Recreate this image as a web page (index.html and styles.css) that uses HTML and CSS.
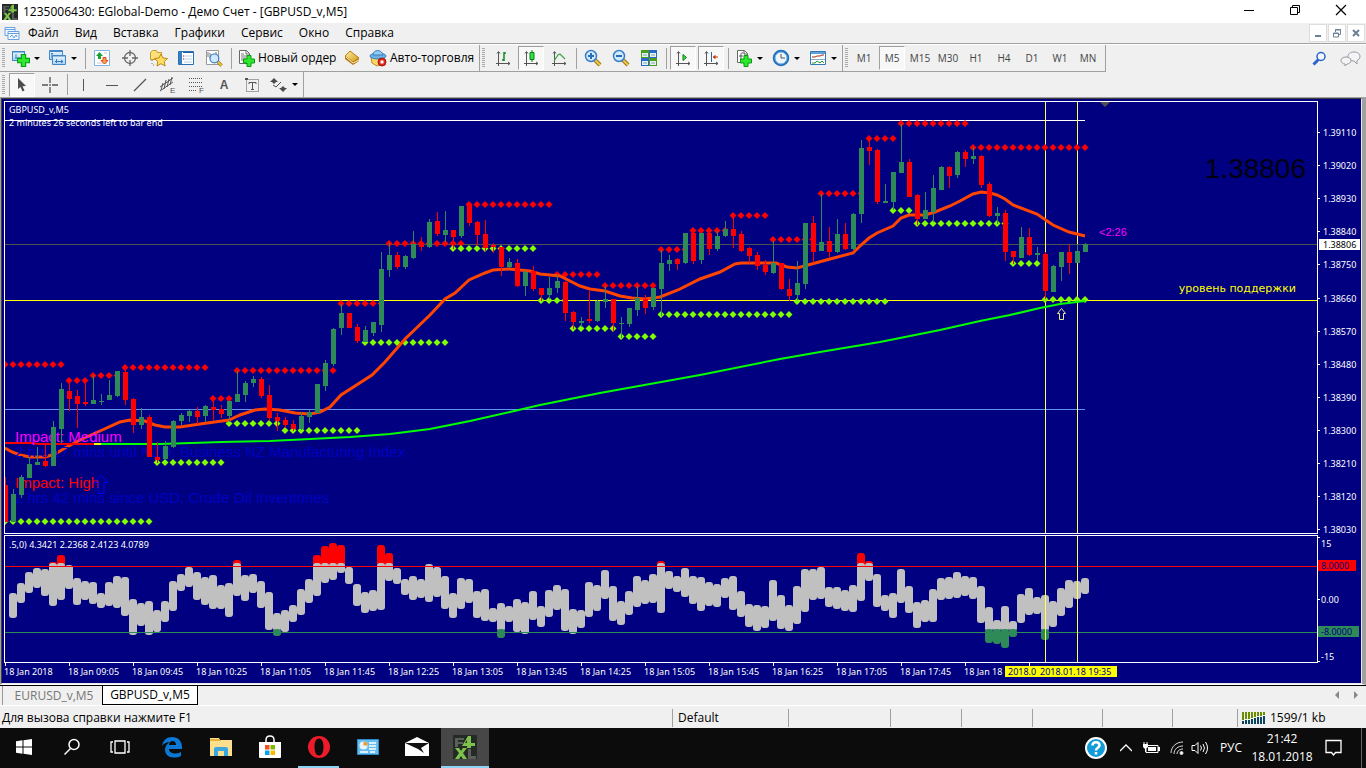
FILE: index.html
```html
<!DOCTYPE html>
<html lang="ru">
<head>
<meta charset="utf-8">
<title>1235006430: EGlobal-Demo - Демо Счет - [GBPUSD_v,M5]</title>
<link rel="stylesheet" href="styles.css">
</head>
<body>
<svg class="defs" aria-hidden="true">
  <defs>
    <linearGradient id="gold" x1="0" y1="0" x2="1" y2="1"><stop offset="0" stop-color="#fff2a0"/><stop offset="1" stop-color="#d09a18"/></linearGradient>
    <linearGradient id="sky" x1="0" y1="0" x2="0" y2="1"><stop offset="0" stop-color="#eaf6ff"/><stop offset="1" stop-color="#a8d4f5"/></linearGradient>
    <symbol id="x4" viewBox="0 0 24 24"><rect width="24" height="24" fill="#262a26"/><path d="M2 3h9v2H5v2h5v2H5v3H2z" fill="#596059"/><path d="M18 1v7h4v3h-4v2h-4v-2H9L15 1zm-4 7V5l-2 3z" fill="#7dc24b"/><path d="M2 13h4l2 3 2-3h4l-4 5 4 6h-4l-2-3-2 3H2l4-6z" fill="#7dc24b"/><path d="M15 14h3v7h5v3h-8z" fill="#596059"/></symbol>
    <symbol id="plus" viewBox="0 0 12 12"><path d="M4 .5h4V4h3.500v4H8v3.500H4V8H.5V4H4z" fill="#2ee82e" stroke="#079a15"/></symbol>
    <symbol id="axes" viewBox="0 0 20 20"><path d="M5.500 4v14M3 15.500h14M4 5.500l1.500-2L7 5.500M15 14l2 1.500-2 1.500" fill="none" stroke="#555"/></symbol>
    <symbol id="lens" viewBox="0 0 20 20"><path d="M12 12l5 5" stroke="#9b741a" stroke-width="4"/><path d="M12 12l5 5" stroke="#f0cc45" stroke-width="2"/><circle cx="8" cy="8" r="5.500" fill="#cfeaff" stroke="#3b7dc6" stroke-width="1.500"/></symbol>
  </defs>
</svg>

<header class="titlebar">
  <svg class="app-logo" aria-hidden="true"><use href="#x4"/></svg>
  <h1>1235006430: EGlobal-Demo - Демо Счет - [GBPUSD_v,M5]</h1>
  <div class="window-controls">
    <button aria-label="Свернуть"><svg width="12" height="12"><path d="M1 6.500h10" stroke="#000"/></svg></button>
    <button aria-label="Восстановить"><svg width="12" height="12" fill="none" stroke="#000"><path d="M1.500 3.500h7v7h-7zM3.500 3.500v-2h7v7h-2"/></svg></button>
    <button aria-label="Закрыть"><svg width="12" height="12"><path d="M1 1l10 10M11 1L1 11" stroke="#000" stroke-width="1.200"/></svg></button>
  </div>
</header>

<nav class="menubar" aria-label="Меню">
  <svg class="menu-icon" viewBox="0 0 16 16" fill="#f3f8ff" stroke="#69a1e4"><path d="M1 2.500h10v8H1zM1 4.500h10"/><path d="M4 6.500h11v8H4zM4 8.500h11M6 12l2-2 2 3 2-3 1 2"/></svg>
  <button>Файл</button><button>Вид</button><button>Вставка</button><button>Графики</button><button>Сервис</button><button>Окно</button><button>Справка</button>
  <div class="mdi-controls">
    <button aria-label="Свернуть окно"><svg width="10" height="10"><path d="M2 8h6" stroke="#6b8195" stroke-width="2"/></svg></button>
    <button aria-label="Восстановить окно"><svg width="10" height="10" fill="none" stroke="#6b8195"><path d="M1.500 5h5v4h-5zM1 5.500h6M3.500 4V1.500h5v5H7M3 2h6"/></svg></button>
    <button aria-label="Закрыть окно"><svg width="10" height="10"><path d="M2 2l6 6M8 2L2 8" stroke="#6b8195" stroke-width="2"/></svg></button>
  </div>
</nav>

<div class="toolrow">
  <div class="toolbar">
    <button class="tool split" aria-label="Новый график"><svg class="icon"><rect x="1.500" y="3.500" width="12" height="9" fill="url(#sky)" stroke="#4286c4"/><path d="M2 4h11" stroke="#4286c4"/><path d="M4 10h7M5 6v5" stroke="#4b87b9"/><use href="#plus" x="6" y="6" width="13" height="13"/></svg><i class="caret"></i></button>
    <button class="tool split" aria-label="Профили"><svg class="icon"><g fill="url(#sky)" stroke="#4286c4"><path d="M1.500 2.500h13v9h-13z"/><path d="M4.500 7.500h13v9h-13z"/></g><path d="M2 3.500h12M5 8h12" stroke="#4286c4"/><path d="M7 13.500h8M8.500 11v4M13 12l2 1.500-2 1.500M4 5v5M3 6l1-1 1 1" fill="none" stroke="#3a7cba"/></svg><i class="caret"></i></button>
    <hr>
    <button class="tool" aria-label="Обзор рынка"><svg class="icon"><path d="M2.500 2.500h15v15h-15z" fill="#fff" stroke="#7fb6e6"/><path d="M5 15h10M12 5h3" stroke="#ccc"/><path d="M7.500 4l3.500 4H9v3H6V8H4z" fill="#18a030"/><path d="M12.500 16L9 12.500h2v-3h3v3h2z" fill="#f8a060" stroke="#e04a10"/></svg></button>
    <button class="tool" aria-label="Окно данных"><svg class="icon" fill="none" stroke="#666" stroke-width="1.300"><circle cx="10" cy="10" r="5.500"/><path d="M10 2v6M10 12v6M2 10h6M12 10h6"/></svg></button>
    <button class="tool" aria-label="Навигатор"><svg class="icon"><path d="M2.500 4.500l2-2h4l1 2h4v7h-11z" fill="#fbe07a" stroke="#c79a2a"/><path d="M4 12v5h4" stroke="#777" fill="none" stroke-dasharray="1 2"/><path d="M13 6l2 4 4.500.5-3.300 3 .9 4.500-4.100-2.300L9 18l.8-4.500-3.300-3L11 10z" fill="#ffdf5c" stroke="#bd861a"/></svg></button>
    <button class="tool" aria-label="Терминал"><svg class="icon"><path d="M2.500 3.500h15v13h-15z" fill="#fff" stroke="#2a70b4"/><path d="M3 4h3v12H3z" fill="#347fc6"/><path d="M7 4.500h10" stroke="#1e5fa2"/><path d="M8 8h8M8 11h8M8 14h8" stroke="#b4cfe8"/><path d="M7 8h1M7 11h1" stroke="#c00"/></svg></button>
    <button class="tool" aria-label="Тестер стратегий"><svg class="icon"><path d="M2.500 2.500h12v14h-12z" fill="#fff" stroke="#999"/><path d="M4 9V4M6 10V5M12 8V4" stroke="#777"/><use href="#lens" x="4" y="4" width="16" height="16"/></svg></button>
    <hr>
    <button class="tool text"><svg class="icon"><path d="M2.500 2.500h7l3 3v10h-10z" fill="#fff" stroke="#666"/><path d="M9 3v3h3" fill="none" stroke="#666"/><path d="M4 6h3M4 8h6M4 10h5M4 12h3" stroke="#777"/><use href="#plus" x="6" y="7" width="12" height="12"/></svg>Новый ордер</button>
    <button class="tool book" aria-label="Метаредактор"><svg class="icon"><path d="M8 3l9 7v3l-6 4-8-6V8z" fill="#b57913"/><path d="M8 3l9 7-6 4-8-6z" fill="url(#gold)" stroke="#b98118"/><path d="M4 9l7 6 6-3" fill="none" stroke="#fff3bd"/></svg></button>
    <button class="tool text auto"><svg class="icon"><path d="M3 9h13l-2 7-5 2-5-3z" fill="#f7d766" stroke="#bb8c20"/><ellipse cx="10" cy="8" rx="8" ry="3" fill="#6aafe6" stroke="#3a80b8"/><path d="M5 7c0-6 9-6 10 0z" fill="#93ccf3" stroke="#3a80b8"/><circle cx="14" cy="14" r="4" fill="#dc2b18" stroke="#aa180d"/><path d="M12.500 12.500h3v3h-3z" fill="#fff"/></svg>Авто-торговля</button>
  </div>
  <div class="toolbar">
    <button class="tool" aria-label="Бары"><svg class="icon"><use href="#axes"/><path d="M11 4v9M9 12h2M11 5h2" stroke="#148a22" stroke-width="1.500"/></svg></button>
    <button class="tool pressed" aria-label="Свечи"><svg class="icon"><use href="#axes"/><path d="M11 2v12" stroke="#087f12"/><path d="M9 4.500h4v7H9z" fill="#32e04a" stroke="#087f12"/></svg></button>
    <button class="tool" aria-label="Линия"><svg class="icon"><use href="#axes"/><path d="M5 13l4-6 2-1 5 5" fill="none" stroke="#42a647" stroke-width="1.300"/></svg></button>
    <hr>
    <button class="tool" aria-label="Увеличить"><svg class="icon"><use href="#lens"/><path d="M5 8h6M8 5v6" stroke="#276db8" stroke-width="2"/></svg></button>
    <button class="tool" aria-label="Уменьшить"><svg class="icon"><use href="#lens"/><path d="M5 8h6" stroke="#276db8" stroke-width="2"/></svg></button>
    <button class="tool" aria-label="Упорядочить окна"><svg class="icon"><path d="M2 2h8v8H2zM10 10h8v8h-8z" fill="#4a9e1e"/><path d="M10 2h8v8h-8zM2 10h8v8H2z" fill="#2b68ce"/><path d="M3 5h6v4H3zM11 5h6v4h-6zM3 13h6v4H3zM11 13h6v4h-6z" fill="#e8f2ee"/><path d="M4 7h4M12 7h4M4 15h4M12 15h4" stroke="#7fa6b0"/></svg></button>
    <hr>
    <button class="tool pressed" aria-label="Автопрокрутка"><svg class="icon"><use href="#axes"/><path d="M10 6.500l3.500 3-3.500 3z" fill="#3fe04f" stroke="#087f12"/></svg></button>
    <button class="tool pressed" aria-label="Сдвиг графика"><svg class="icon"><use href="#axes"/><path d="M10.500 4v10" stroke="#2169a8"/><path d="M12 9h5M14 7.500L12.500 9l1.500 1.500z" stroke="#c23708" fill="#c23708"/></svg></button>
    <hr>
    <button class="tool split" aria-label="Индикаторы"><svg class="icon"><path d="M3.500 2.500h7l3 3v9h-10z" fill="#fff" stroke="#666"/><path d="M10 3v3h3M9 5c-3-1-2 3-2 6M5 8h4" fill="none" stroke="#555"/><use href="#plus" x="6" y="7" width="12" height="12"/></svg><i class="caret"></i></button>
    <button class="tool split" aria-label="Периоды"><svg class="icon"><circle cx="10" cy="10" r="7" fill="#eef6fc" stroke="#1f6ebb" stroke-width="2.500"/><circle cx="10" cy="10" r="6" fill="none" stroke="#7cb9ea"/><path d="M10 6v4h4" fill="none" stroke="#555"/></svg><i class="caret"></i></button>
    <button class="tool split" aria-label="Шаблоны"><svg class="icon"><path d="M2.500 3.500h15v13h-15z" fill="#fff" stroke="#3379b8"/><path d="M3 5h14" stroke="#5e9fd8" stroke-width="2"/><path d="M3 11.500h14" stroke="#88a9c8"/><path d="M4 9h3l2-1h3l2-1h2" stroke="#a12b12" fill="none"/><path d="M4 15h3l2-2 3 2 2-2 2 2" stroke="#1f9d2c" fill="none"/></svg><i class="caret"></i></button>
  </div>
  <div class="toolbar periods">
    <button class="tool">M1</button><button class="tool pressed">M5</button><button class="tool">M15</button><button class="tool">M30</button><button class="tool">H1</button><button class="tool">H4</button><button class="tool">D1</button><button class="tool">W1</button><button class="tool">MN</button>
  </div>
  <div class="side-tools">
    <button aria-label="Поиск"><svg width="16" height="16"><path d="M1.500 13.500l5-5" stroke="#2b62ce" stroke-width="3"/><circle cx="9" cy="5.500" r="4" fill="#f4f9ff" stroke="#2b62ce" stroke-width="1.500"/></svg></button>
    <button aria-label="Чат"><svg width="22" height="16" fill="#f4f4f8" stroke="#999"><path d="M14 1c4 0 6 2 6 4.500S18 9 17 9.500V13l-3-3c-3 0-6-2-6-4.500S10 1 14 1z"/><path d="M6 6c3 0 5 1.500 5 3.500S9 13 7 13l-2 2v-2c-2 0-4-1.500-4-3.500S3 6 6 6z"/></svg></button>
  </div>
</div>

<div class="toolrow second">
  <div class="toolbar">
    <button class="tool pressed" aria-label="Курсор"><svg class="icon"><path d="M6 3l8 8-3.500.2 2 4.300-2 1-2-4.500L6 14z" fill="#4d4d4d"/></svg></button>
    <button class="tool" aria-label="Перекрестие"><svg class="icon" stroke="#555" stroke-width="1.300"><path d="M10 2v6M10 12v6M2 10h6M12 10h6M10 9v2"/></svg></button>
    <hr>
    <button class="tool" aria-label="Вертикальная линия"><svg class="icon"><path d="M9.500 4v12" stroke="#555"/></svg></button>
    <button class="tool" aria-label="Горизонтальная линия"><svg class="icon"><path d="M4 10.500h12" stroke="#555"/></svg></button>
    <button class="tool" aria-label="Трендовая линия"><svg class="icon"><path d="M4 16L16 4" stroke="#555" stroke-width="1.300"/></svg></button>
    <button class="tool" aria-label="Равноудаленный канал"><svg class="icon" stroke="#555"><path d="M2 12L15 3M2 16L15 7M5 8l-2 7M8 5L6 14M11 4L9 12M14 2l-2 8"/><text class="icon-letter" x="12" y="18">E</text></svg></button>
    <button class="tool" aria-label="Линии Фибоначчи"><svg class="icon" stroke="#555"><path d="M3 3.500h14M3 7.500h14M3 11.500h14M3 15.500h8" stroke-dasharray="1 1"/><text class="icon-letter" x="13" y="18">F</text></svg></button>
    <button class="tool letter">A</button>
    <button class="tool" aria-label="Текстовая метка"><svg class="icon"><path d="M4.500 4.500h12v12h-12z" fill="none" stroke="#555" stroke-dasharray="1 1"/><path d="M3 3h3v2H3z" fill="#555"/><path d="M7 9V7.500h7V9M10.500 7v8M9 14.500h3" fill="none" stroke="#555"/></svg></button>
    <button class="tool split" aria-label="Стрелки"><svg class="icon"><path d="M1 7l4-4 4 4H7l-2 2-2-2zM18 13l-4 4-4-4h2l2-2 2 2z" fill="#4d4d4d"/><path d="M4 10l3 2 5-5" fill="none" stroke="#4d4d4d"/></svg><i class="caret"></i></button>
  </div>
</div>

<main class="workspace">
  <div class="chart" id="chart">
    <svg class="plot" id="price-plot" role="img" aria-label="GBPUSD_v,M5"></svg>
    <svg class="axis" id="price-axis"></svg>
    <svg class="plot" id="osc-plot" role="img" aria-label="Индикатор"></svg>
    <svg class="axis" id="osc-axis"></svg>
    <svg class="time-axis" id="time-axis"></svg>
  </div>
</main>

<div class="tabs">
  <button>EURUSD_v,M5</button><button class="active">GBPUSD_v,M5</button>
  <div class="tab-scroll"><button aria-label="Назад"><i class="left"></i></button><button aria-label="Вперед"><i class="right"></i></button></div>
</div>

<footer class="statusbar">
  <span class="hint">Для вызова справки нажмите F1</span>
  <span class="profile">Default</span><span class="c3"></span><span class="c4"></span><span class="c4"></span><span class="c5"></span><span class="c5"></span><span class="c6"></span>
  <span class="traffic"><svg width="24" height="14" id="traffic-icon"></svg>1599/1 kb</span>
</footer>

<nav class="taskbar" aria-label="Панель задач">
  <button class="system" aria-label="Пуск"><svg width="16" height="16" fill="#fff"><path d="M0 2.300l6.500-1v6.200H0zM7.500 1.200L16 0v7.500H7.500zM0 8.500h6.500v6.200l-6.500-1zM7.500 8.500H16V16l-8.500-1.200z"/></svg></button>
  <button class="system" aria-label="Поиск"><svg width="18" height="18" fill="none" stroke="#fff" stroke-width="1.500"><circle cx="11" cy="6.500" r="5"/><path d="M7.500 10.500L1.500 16.500"/></svg></button>
  <button class="system last" aria-label="Представление задач"><svg width="20" height="14" fill="none" stroke="#fff" stroke-width="1.300"><path d="M5 1h10v12H5zM3 2H1v10h2M17 2h2v10h-2"/></svg></button>
  <button aria-label="Edge"><svg width="22" height="22" viewBox="0 0 22 22"><path d="M1 10C2 4 6 1 11 1c6 0 10 4 10 10v2H8c0 3 3 4.500 6 4.500 2 0 4-.5 6-1.500v4c-2 1-4.500 1.500-7 1.500-6 0-9-3.500-9-8 0-3 2-6 5-7.500C6 6 3 7 1 10zm7-1h7c0-2.500-1.500-4-3.500-4S8 6.500 8 9z" fill="#0a78d4"/></svg></button>
  <button aria-label="Проводник"><svg width="22" height="20"><path d="M0 2V1h9l1 2h12v16H0z" fill="#fae08c"/><path d="M0 2h9l2 2H0z" fill="#e9b33b"/><path d="M4 19v-7q0-2 2-2h10q2 0 2 2v7h-4v-5H8v5z" fill="#3aa7e0"/></svg></button>
  <button aria-label="Магазин"><svg width="24" height="24"><path d="M1 7h22v15q0 1-1 1H2q-1 0-1-1z" fill="#fff"/><path d="M8 7V5q0-4 4-4t4 4v2" fill="none" stroke="#fff" stroke-width="1.500"/><path d="M7 10h4.500v4.500H7z" fill="#f25022"/><path d="M12.500 10H17v4.500h-4.500z" fill="#7fba00"/><path d="M7 15.500h4.500V20H7z" fill="#00a4ef"/><path d="M12.500 15.500H17V20h-4.500z" fill="#ffb900"/></svg></button>
  <button class="running" aria-label="Opera"><svg width="24" height="24"><path fill-rule="evenodd" d="M12 1a11 11 0 1 1 0 22 11 11 0 0 1 0-22zm0 2.500C8.500 3.500 7.500 8 7.500 12s1 8.500 4.500 8.500 4.500-4.500 4.500-8.500-1-8.500-4.500-8.500z" fill="#ee1b2b"/></svg></button>
  <button aria-label="Панель управления"><svg width="22" height="16"><path d="M.5.5h21v15H.5z" fill="#68bdf0" stroke="#2b8bcb"/><circle cx="6.500" cy="6.500" r="4" fill="#e8f5ff"/><path d="M6.500 2.500v4h4a4 4 0 0 0-4-4z" fill="#f29b27"/><path d="M12 4h7M12 7h7M12 10h7M3 13h8M13 13h5" stroke="#fff" stroke-width="1.500"/></svg></button>
  <button aria-label="Почта"><svg width="24" height="20"><path d="M0 6l12-6 12 6v13H0z" fill="#fff"/><path d="M0 6h24L16 11l3 5-6-4z" fill="#111"/></svg></button>
  <button class="running current" aria-label="MetaTrader"><svg width="24" height="24"><use href="#x4"/></svg></button>
  <div class="tray">
    <button class="help" aria-label="Справка"><svg width="24" height="24"><circle cx="12" cy="12" r="10" fill="#139bd8" stroke="#fff" stroke-width="2"/><path d="M8.500 9.500C8.500 5 15.500 5 15.500 9.500c0 2-3.500 2-3.500 5M12 16v2.500" fill="none" stroke="#fff" stroke-width="2.500"/></svg></button>
    <button class="chevron" aria-label="Скрытые значки"><svg width="12" height="8"><path d="M0 7l6-6 6 6" fill="none" stroke="#fff" stroke-width="1.300"/></svg></button>
    <button class="battery" aria-label="Батарея"><svg width="18" height="12"><path d="M5 3.500h11v7H4V7" fill="none" stroke="#fff"/><path d="M6 5h8v4H6zM16 5h2v4h-2zM1 2h5v3l-2 2H3L1 5z" fill="#fff"/><path d="M2 0v2M5 0v2M3.500 6v4" stroke="#fff"/></svg></button>
    <button class="wifi" aria-label="Сеть"><svg width="14" height="14" fill="none" stroke="#ddd"><path d="M1 12C1 6 6 1 13 1M4 13c0-5 4-8 9-8M7 13c0-3 3-5 6-5"/><circle cx="11.500" cy="12" r="1.500" fill="#fff"/></svg></button>
    <button class="volume" aria-label="Громкость"><svg width="18" height="14" fill="none" stroke="#fff"><path d="M1 4.500h3l3-3v11l-3-3H1zM9.500 4.500q2 2.500 0 5M12 3q3 4 0 8M14.500 1q4 6 0 12"/></svg></button>
    <button class="lang">РУС</button>
    <button class="clock"><span>21:42</span><span>18.01.2018</span></button>
    <button class="notify" aria-label="Уведомления"><svg width="18" height="18"><path d="M1 1.500h15v12h-5.500L8.500 16l-2-2.500H1z" fill="none" stroke="#fff" stroke-width="1.300"/></svg></button>
    <i class="desktop-edge"></i>
  </div>
</nav>
<script src="chart.js"></script>
</body>
</html>
```

FILE: styles.css
```css
* { box-sizing: border-box; }
body {
  margin: 0; height: 100vh; min-height: 480px; display: flex; flex-direction: column; overflow: hidden;
  background: #f0f0f0; color: #000; font: 12px/16px "Open Sans", "Noto Sans", sans-serif;
}
button { border: 0; padding: 0; margin: 0; background: none; color: inherit; font: inherit; display: flex; align-items: center; justify-content: center; white-space: nowrap; }
h1 { margin: 0; font: inherit; }
svg { display: block; flex: none; }
.defs { position: absolute; width: 0; height: 0; }

.titlebar { height: 23px; flex: none; background: #fff; display: flex; align-items: center; padding-left: 2px; gap: 5px; }
.app-logo { width: 16px; height: 16px; }
.window-controls { margin-left: auto; display: flex; height: 100%; padding-right: 2px; }
.window-controls button { width: 46px; height: 20px; }

.menubar { height: 21px; flex: none; display: flex; align-items: center; padding-left: 4px; border-bottom: 1px solid #a0a0a0; }
.menu-icon { width: 16px; height: 16px; }
.menubar > button { padding: 0 8px; height: 20px; }
.mdi-controls { margin-left: auto; display: flex; gap: 1px; padding-right: 1px; }
.mdi-controls button { width: 18px; height: 18px; background: #fff; border: 1px solid #ddd; }

.toolrow { height: 28px; flex: none; display: flex; align-items: stretch; border-top: 1px solid #fff; }
.toolrow.second { height: 25px; border: 0; }
.toolbar {
  display: flex; align-items: center; padding-left: 8px; border-right: 1px solid #a0a0a0; border-bottom: 1px solid #a0a0a0;
  background: repeating-linear-gradient(#aaa 0 1px, #f0f0f0 1px 2px) 2px 3px / 3px 19px no-repeat;
}
.toolbar + .toolbar { padding-left: 9px; }
.toolbar + .periods { padding: 0 3px 0 7px; }
.second .toolbar { border-bottom: 0; }
.toolbar hr { width: 1px; height: 21px; margin: 0 2px 0 3px; border: 0; background: #a0a0a0; }
.tool { width: 28px; height: 24px; flex: none; }
.tool.split { width: 37px; gap: 5px; padding-right: 2px; }
.tool.text { gap: 1px; width: 104px; padding-left: 3px; justify-content: flex-start; }
.tool.auto { width: 113px; gap: 2px; padding-left: 2px; }
.tool.pressed { width: 26px; margin: 0 1px; background: #f8f8f8; border: 1px solid #fff; border-top-color: #a0a0a0; border-left-color: #a0a0a0; }
.icon { width: 20px; height: 20px; overflow: visible; }
.caret { border: 3px solid transparent; border-top-color: #000; border-bottom: 0; margin-left: -2px; }
.icon-letter { font: 8px "Liberation Sans", sans-serif; fill: #555; stroke: none; }
.periods .tool { color: #444; font-size: 10px; }
.tool.letter { font: bold 12px "Liberation Sans", sans-serif; color: #555; }
.side-tools { margin-left: auto; display: flex; align-items: center; gap: 12px; padding-right: 4px; }

.workspace { flex: 1; min-height: 0; border: 1px solid #a0a0a0; border-right-width: 4px; border-bottom-color: #fff; }
.chart {
  height: 100%; display: grid; grid-template-columns: 1fr 43px; grid-template-rows: 1fr 128px 19px; row-gap: 1px;
  padding: 2px 0 0 2px; background: #000080; border: 1px solid; border-color: #404040 #e8e8e8 #e8e8e8 #404040;
}
.plot { width: 100%; height: 100%; border: 1px solid #fff; overflow: hidden; min-height: 0; }
.axis { width: 100%; height: 100%; overflow: visible; min-height: 0; }
.time-axis { grid-column: 1 / 3; width: 100%; height: 20px; margin-top: -1px; overflow: visible; }
.tick-label { font: 9px "Noto Sans", sans-serif; fill: #fff; }
.dark { fill: #000080; }
.black { fill: #000; }
.bid { font: 28px "Liberation Sans", sans-serif; fill: #000010; text-anchor: end; }
.countdown { font: 11px "Liberation Sans", sans-serif; fill: #f0f; }
.support { font: 11px "DejaVu Sans", sans-serif; fill: #ff0; text-anchor: end; }
.news { font: 15px "Liberation Sans", sans-serif; }
.medium { fill: #f0f; }
.high { fill: #f00; }
.event { fill: #0000c4; }

.tabs { height: 21px; flex: none; display: flex; align-items: flex-start; border-top: 1px solid #000; border-bottom: 1px solid #fff; padding-left: 2px; }
.tabs > button { height: 19px; width: 100px; color: #777; border-left: 1px solid #999; padding-left: 3px; }
.tabs > button.active { width: 96px; padding: 0; background: #fff; color: #000; border: 1px solid #000; border-top: 0; }
.tab-scroll { margin-left: auto; display: flex; gap: 3px; padding: 4px 2px 0 0; }
.tab-scroll button { width: 16px; height: 9px; }
.tab-scroll i { border: 4px solid transparent; }
.tab-scroll .left { border-right-color: #888; border-left: 0; }
.tab-scroll .right { border-left-color: #888; border-right: 0; }

.statusbar { height: 22px; flex: none; display: flex; align-items: center; padding-top: 2px; }
.statusbar span { height: 18px; display: flex; align-items: center; border-left: 1px solid #a0a0a0; padding-left: 5px; }
.statusbar .hint { flex: 1; border: 0; padding-left: 2px; }
.statusbar .profile { width: 116px; }
.statusbar .c3 { width: 102px; }
.statusbar .c4 { width: 71px; }
.statusbar .c5 { width: 70px; }
.statusbar .c6 { width: 65px; }
.statusbar .traffic { width: 129px; gap: 4px; padding-left: 4px; }

.taskbar { height: 40px; flex: none; display: flex; background: #0b0c0b; color: #fff; }
.taskbar > button { width: 49px; height: 40px; border-bottom: 2px solid transparent; }
.taskbar > .system { width: 48px; }
.taskbar > .last { margin-right: 3px; }
.taskbar > .running { width: 41px; margin: 0 4px; border-bottom-color: #8dd3f5; }
.taskbar > .current { width: 48px; margin: 0; background: #464746; }
.tray { margin-left: auto; display: flex; align-items: center; height: 100%; }
.help { margin-right: 12px; }
.chevron, .battery { margin-right: 10px; }
.wifi { margin-right: 7px; }
.volume { margin-right: 10px; }
.lang { width: 24px; margin-right: 10px; }
.clock { width: 58px; flex-direction: column; line-height: 18px; margin-right: 14px; }
.notify { margin-right: 18px; }
.desktop-edge { width: 5px; height: 40px; border-left: 1px solid #666; }
```

FILE: chart.js
```js
const NS = "http://www.w3.org/2000/svg";
const byId = id => document.getElementById(id);

function add(parent, tag, attrs, text) {
  const el = document.createElementNS(NS, tag);
  for (const key in attrs) el.setAttribute(key, attrs[key]);
  if (text !== undefined) el.textContent = text;
  parent.appendChild(el);
  return el;
}

const STEP = 8, FIRST_X = 5;
const UP = "#2e8b57", DOWN = "#ff0000";

/* direction, body top, body bottom, high, low */
const candles = `
r485-522-477-522 g494-522-489-522 g477-495-475-498 g464-478-457-478 g462-465-447-465 r461-466-445-467 g427-466-421-466 g389-429-383-443
r391-399-382-411 r396-404-390-428 r402-404-382-406 g400-404-375-404 g401-402-394-405 g395-400-380-400 g371-396-371-397 r372-400-368-405
r399-425-398-433 g417-425-408-429 r417-457-415-457 r457-460-442-463 g446-459-441-460 g421-447-420-448 g415-421-413-425 g411-416-410-422
r411-417-407-424 g406-416-405-422 r407-410-400-420 r409-414-405-418 g401-416-401-422 g394-402-371-402 g383-395-381-402 g379-383-376-387
r379-396-377-398 r395-418-385-421 r417-421-413-431 r420-425-417-428 r424-429-420-431 g416-429-412-430 g412-417-410-423 g384-413-384-413
g363-386-360-391 g329-364-328-366 g313-328-304-335 r313-328-313-328 r327-341-324-343 g330-342-326-342 g322-333-322-336 g269-325-252-332
g255-270-243-277 r255-267-252-269 g256-267-255-269 g244-258-231-259 r244-247-237-251 g222-247-219-248 r221-234-212-236 g230-235-211-242
r230-237-230-249 g206-236-206-238 r204-223-204-226 r222-235-221-246 r234-248-220-251 r245-247-243-253 r247-267-247-276 g262-267-258-268
r263-286-259-287 g272-286-270-296 r271-289-266-291 r288-295-288-301 g288-295-277-299 g281-288-275-293 r282-313-281-321 r312-322-311-329
g321-323-317-327 r319-321-291-323 g301-321-300-322 g299-302-286-308 r299-323-299-331 g323-324-317-338 g308-324-308-327 g298-310-286-316
r299-308-295-314 g288-307-288-310 g263-289-250-316 g260-264-255-271 r259-264-258-270 g233-263-233-264 r233-261-232-264 g233-260-233-264
r233-249-233-255 g236-249-231-251 g229-236-221-237 r229-236-215-248 r234-251-231-252 r248-256-247-263 r255-266-252-270 r265-272-260-275
g263-273-241-274 r263-289-263-290 r289-296-279-301 g283-295-261-300 g223-284-223-289 r223-252-216-263 g242-251-194-251 r241-252-227-257
g234-252-219-253 r234-249-223-250 g214-249-213-250 g148-214-140-223 r147-151-138-165 r150-202-149-204 g201-203-184-203 g172-202-172-210
g162-173-124-173 r162-197-159-197 r195-219-194-225 g210-219-192-219 g188-212-175-222 g167-190-166-190 r167-176-166-188 g152-175-151-178
r152-159-150-167 g156-159-147-164 r156-185-155-188 r184-216-182-217 g213-216-207-224 r213-252-210-261 r251-257-251-264 g237-258-227-258
r237-255-228-256 g253-255-247-260 r254-291-252-299 g266-292-265-292 g252-267-252-281 r252-263-245-274 g251-263-244-263 g244-252-243-252`
  .trim().split(/\s+/);

/* first x, last x, y */
const resistance = [[5,61,364],[69,85,380],[93,117,375],[125,205,367],[213,229,398],[237,333,370],[341,381,303],[389,461,243],
  [469,549,204],[557,597,274],[605,653,285],[661,685,249],[693,725,230],[733,765,215],[773,813,239],[821,861,193],
  [869,893,138],[901,965,123],[973,1085,147]];
const support = [[5,149,521],[157,221,462],[229,277,423],[285,357,430],[365,445,342],[453,533,248],[541,565,300],[573,613,328],
  [621,653,336],[661,789,314],[797,885,301],[893,909,210],[917,1005,223],[1013,1037,263],[1045,1085,299]];

const fastMA = "5,448 12,452 20,455 30,457 45,457 55,454 65,448 80,440 100,431 120,422 130,420 145,421 155,425 165,427 180,427 200,424 229,420 240,415 255,410 265,409 280,410 295,413 310,414 320,412 330,407 341,395 355,386 372,375 385,362 405,339 430,315 445,299 455,293 469,280 485,273 493,270 509,269 530,271 540,274 560,276 580,286 590,289 605,291 620,296 632,298 645,299 660,297 678,290 700,279 720,272 735,264 741,263 776,263 787,267 797,268 808,265 830,259 853,253 861,245 869,238 877,233 893,226 901,218 909,215 925,215 935,212 950,206 960,201 973,194 981,192 990,193 997,195 1005,199 1013,205 1037,214 1053,225 1069,232 1085,236";
const slowMA = "101,444 160,444 222,442 270,441 310,439 350,437 390,434 430,429 470,421 510,412 540,405 600,393 650,384 700,375 780,359 820,352 880,342 940,330 980,321 1010,315 1040,308 1060,304 1085,301";

/* ---- price panel ---- */
const price = add(byId("price-plot"), "g", { transform: "translate(-5 -102)" });
const hline = (g, y, color, width) => add(g, "rect", { x: 5, y, width, height: 1, fill: color });
const vline = (g, x) => add(g, "rect", { x, y: 0, width: 1, height: 2000, fill: "#ffff50" });
const wide = "100%";

hline(price, 120, "#ffffff", 1080);
hline(price, 244, "#505050", wide);
hline(price, 300, "#ffff00", wide);
hline(price, 409, "#6495ed", 1080);
vline(price, 1045);
vline(price, 1077);

function dots(rows, color) {
  for (const [from, to, y] of rows) {
    for (let x = from; x <= to; x += STEP) {
      add(price, "path", { d: `M${x} ${y - 3}l3.5 3.5-3.5 3.5-3.5-3.5z`, fill: color });
    }
  }
}
dots(resistance, DOWN);
dots(support, "#7fff00");

const poly = (points, color, w) => add(price, "polyline", { points, fill: "none", stroke: color, "stroke-width": w });
poly(fastMA, "#ff4500", 3);
poly("5,443 30,443 40,444 95,444", "#ff0000", 2);
poly("94,444 101,444", "#ffff00", 2);
poly(slowMA, "#00ff00", 2);

const label = (g, x, y, cls, text) => add(g, "text", { x, y, class: cls }, text);
label(price, 15, 442, "news medium", "Impact: Medium");
label(price, 15, 457, "news event", "2 hrs 17 mins until NZD: Business NZ Manufacturing Index");
label(price, 15, 488, "news high", "Impact: High");
label(price, 15, 503, "news event", "2 hrs 42 mins since USD: Crude Oil Inventories");
add(price, "path", { d: "M101 475.500l7 7h-4v11h-6v-11h-4z", fill: "none", stroke: "#0000ff" });

candles.forEach((item, i) => {
  const [top, bottom, high, low] = item.slice(1).split("-").map(Number);
  const fill = item[0] === "g" ? UP : DOWN;
  const x = FIRST_X + i * STEP;
  add(price, "rect", { x, y: high, width: 1, height: low - high, fill });
  add(price, "rect", { x: x - 2, y: top, width: 5, height: bottom - top, fill });
});

label(price, 9, 113, "tick-label", "GBPUSD_v,M5");
label(price, 9, 126, "tick-label", "2 minutes 26 seconds left to bar end");
label(price, 1099, 236, "countdown", "<2:26");
label(price, 1306, 178, "bid", "1.38806");
label(price, 1296, 292, "support", "уровень поддержки");
add(price, "path", { d: "M1061.500 308.500l4 5h-2v6h-4v-6h-2z", fill: "none", stroke: "#eeee90" });
add(price, "path", { d: "M1100 102h10l-5 5z", fill: "#505050" });

/* ---- price axis ---- */
const pAxis = add(byId("price-axis"), "g", { transform: "translate(-1318 -101)" });
const tick = (g, y) => add(g, "rect", { x: 1318, y, width: 2, height: 1, fill: "#fff" });
for (let i = 0; i < 13; i++) {
  const y = Math.round(132 + i * 33.1);
  tick(pAxis, y);
  label(pAxis, 1323, y + 4, "tick-label", (1.3911 - i * .0009).toFixed(5));
}
add(pAxis, "rect", { x: 1319, y: 239, width: 41, height: 11, fill: "#fff" });
label(pAxis, 1323, 248, "tick-label black", "1.38806");

/* ---- oscillator panel: top-bottom, optional high (h) or low (l) extension, three units per pixel ---- */
const bars = `
190-263 160-218 126-188 114-174 117-198 100-227h97 100-209h75 105-176 144-224 153-209 156-223 190-233 156-227 138-233 141-257
207-314 219-287 213-314 241-305 213-275 153-242 132-182 112-171 126-209 141-224 135-238 165-236 159-260 100-199h90 135-214
132-188 153-233 186-299 250-303l318 241-305 225-277 178-255 148-220 100-199h75 100-160h48 100-151h39 100-130h45 112-163 163-227
186-250 181-244 100-239h45 100-152h69 114-163 148-194 138-209 148-203 102-215 112-200 138-236 190-263 144-236 148-218 183-263
177-272 235-277 219-303l323 228-277 207-305 216-311 183-269 228-290 180-260 165-239 177-302 237-311 240-293 156-260 165-242
120-206 168-272 213-284 183-254 138-230 150-221 132-218 100-248h93 123-176 138-185 114-200 138-221 141-242 156-227 162-230
144-203 138-239 183-260 222-290 225-302 228-293 150-272 195-296 225-302 168-281 117-245 117-209 111-206 171-230 171-236
180-242 165-245 100-212h69 100-152h93 132-230 195-242 190-263 117-218 168-248 216-293 210-275 178-275 144-209 141-206 126-203
138-197 141-206 168-278 232-303l339 270-303l342 228-303l354 273-303l320 192-278 174-254 201-251 195-303l330 213-290 174-257
150-233 153-206 144-191`.trim().split(/\s+/);

const osc = add(byId("osc-plot"), "g", { transform: "translate(-5 -536)" });
function column(x, top, bottom, fill) {
  const y = 530 + Math.round(top / 3);
  add(osc, "rect", { x: x - 4, y, width: 8, height: 530 + Math.round(bottom / 3) - y, rx: 3, fill });
}
bars.forEach((bar, i) => {
  const [, top, bottom, kind, ext] = bar.match(/(\d+)-(\d+)([hl]?)(\d*)/);
  const x = FIRST_X + (i + 1) * STEP;
  if (kind === "h") column(x, +ext, 118, DOWN);
  column(x, +top, +bottom, "#c0c0c0");
  if (kind === "l") column(x, 297, +ext, UP);
});
hline(osc, 566, "#ff0000", wide);
hline(osc, 632, UP, wide);
vline(osc, 1045);
vline(osc, 1077);
label(osc, 9, 548, "tick-label", ".5,0) 4.3421 2.2368 2.4123 4.0789");

const oAxis = add(byId("osc-axis"), "g", { transform: "translate(-1318 -535)" });
[537, 599, 661].forEach(y => tick(oAxis, y));
label(oAxis, 1321, 547, "tick-label", "15");
label(oAxis, 1321, 603, "tick-label", "0.00");
label(oAxis, 1321, 660, "tick-label", "-15");
add(oAxis, "rect", { x: 1318, y: 560, width: 38, height: 11, fill: "#ff0000" });
label(oAxis, 1321, 569, "tick-label dark", "8.0000");
add(oAxis, "rect", { x: 1318, y: 626, width: 41, height: 11, fill: UP });
label(oAxis, 1321, 635, "tick-label dark", "-8.0000");

/* ---- time axis ---- */
const time = add(byId("time-axis"), "g", { transform: "translate(-4 -663)" });
["2018", "09:05", "09:45", "10:25", "11:05", "11:45", "12:25", "13:05", "13:45", "14:25", "15:05", "15:45", "16:25", "17:05", "17:45", "18"]
  .forEach((t, i) => {
    add(time, "rect", { x: 5 + i * 64, y: 662, width: 1, height: 4, fill: "#fff" });
    label(time, 4 + i * 64, 675, "tick-label", "18 Jan " + t);
  });
add(time, "rect", { x: 1029, y: 662, width: 1, height: 4, fill: "#fff" });
add(time, "rect", { x: 1005, y: 666, width: 112, height: 11, fill: "#ffff00" });
label(time, 1008, 675, "tick-label dark", "2018.0");
label(time, 1040, 675, "tick-label dark", "2018.01.18 19:35");

/* ---- connection indicator ---- */
for (let i = 0; i < 8; i++) {
  const split = 9 - Math.round(i * .7);
  add(byId("traffic-icon"), "rect", { x: i * 3, y: 1, width: 2, height: split - 1, fill: "#6b8e00" });
  add(byId("traffic-icon"), "rect", { x: i * 3, y: split + 1, width: 2, height: 12 - split, fill: "#0b4461" });
}
```
